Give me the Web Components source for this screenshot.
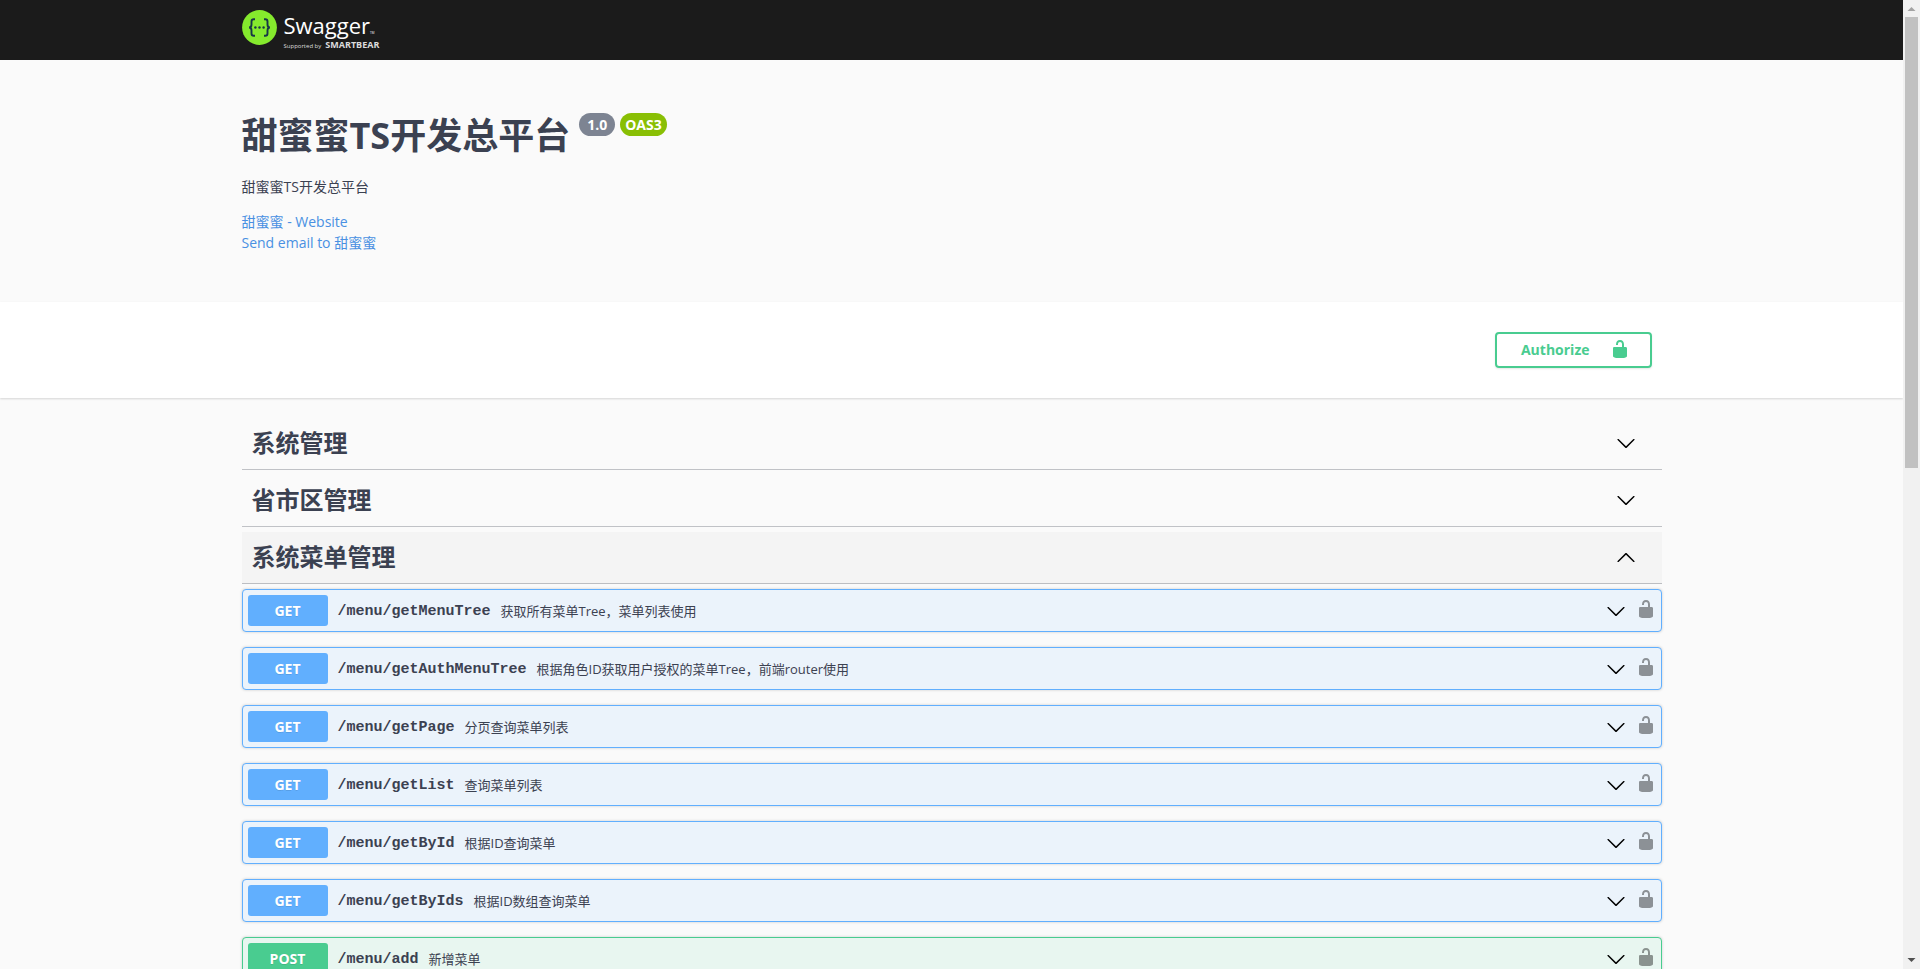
<!DOCTYPE html>
<html lang="zh-CN">
<head>
<meta charset="utf-8">
<meta name="viewport" content="width=device-width, initial-scale=1">
<title>Swagger UI</title>
<style>
  html, body { margin: 0; height: 100%; }
  body {
    font-family: "Open Sans", "Noto Sans CJK SC", sans-serif;
    font-size: 14px;
    color: #3b4151;
    background: #fafafa;
    overflow: hidden;
  }
</style>
</head>
<body>
<scroll-frame>
  <top-bar></top-bar>
  <api-info heading="甜蜜蜜TS开发总平台" version="1.0" spec="OAS3">
    甜蜜蜜TS开发总平台
    <a slot="contact" href="#website">甜蜜蜜 - Website</a>
    <a slot="contact" href="#email">Send email to 甜蜜蜜</a>
  </api-info>
  <auth-bar></auth-bar>
  <tag-list>
    <tag-section heading="系统管理"></tag-section>
    <tag-section heading="省市区管理"></tag-section>
    <tag-section heading="系统菜单管理" open>
      <api-operation method="get" path="/menu/getMenuTree">获取所有菜单Tree，菜单列表使用</api-operation>
      <api-operation method="get" path="/menu/getAuthMenuTree">根据角色ID获取用户授权的菜单Tree，前端router使用</api-operation>
      <api-operation method="get" path="/menu/getPage">分页查询菜单列表</api-operation>
      <api-operation method="get" path="/menu/getList">查询菜单列表</api-operation>
      <api-operation method="get" path="/menu/getById">根据ID查询菜单</api-operation>
      <api-operation method="get" path="/menu/getByIds">根据ID数组查询菜单</api-operation>
      <api-operation method="post" path="/menu/add">新增菜单</api-operation>
    </tag-section>
  </tag-list>
</scroll-frame>

<script>
const WRAP = `.wrap { box-sizing: border-box; max-width: 1460px; margin: 0 auto; padding: 0 20px; }`;
const RESET = `button { font: inherit; color: inherit; background: none; border: 0; margin: 0; padding: 0; cursor: pointer; text-align: left; }`;

function define(name, render) {
  customElements.define(name, class extends HTMLElement {
    connectedCallback() {
      if (this.shadowRoot) return;
      this.attachShadow({ mode: 'open' }).innerHTML = render(this);
    }
  });
}

const ICONS = {
  down: 'M17.418 6.109c.272-.268.709-.268.979 0s.271.701 0 .969l-7.908 7.83c-.27.268-.707.268-.979 0l-7.908-7.83c-.27-.268-.27-.701 0-.969.271-.268.709-.268.979 0L10 13.25l7.418-7.141z',
  up: 'M17.418 14.908c.272.27.709.27.979 0s.271-.701 0-.969l-7.908-7.83c-.27-.268-.707-.268-.979 0l-7.908 7.83c-.27.268-.27.701 0 .969.271.268.709.268.979 0L10 7.767l7.418 7.141z',
  unlocked: 'M15.8 8H14V5.6C14 2.703 12.665 1 10 1 7.334 1 6 2.703 6 5.6V6h2v-.801C8 3.754 8.797 3 10 3c1.203 0 2 .754 2 2.199V8H4c-.553 0-1 .646-1 1.199V17c0 .549.428 1.139.951 1.307l1.197.387C5.672 18.861 6.55 19 7.1 19h5.8c.549 0 1.428-.139 1.951-.307l1.196-.387c.524-.167.953-.757.953-1.306V9.199C17 8.646 16.352 8 15.8 8z'
};

define('ui-icon', el => `
  <style>
    :host { display: block; flex: none; width: 20px; height: 20px; }
    svg { display: block; width: 100%; height: 100%; fill: currentColor; }
  </style>
  <svg viewBox="0 0 20 20" aria-hidden="true"><path d="${ICONS[el.getAttribute('name')]}"/></svg>`);

define('scroll-frame', () => `
  <style>
    :host { display: grid; grid-template-columns: minmax(0, 1fr) 17px; height: 100vh; }
    .view { overflow: hidden; }
    .bar { display: flex; flex-direction: column; align-items: center; background: #f1f1f1; }
    .track { flex: 1; align-self: stretch; padding: 0 2px; }
    .thumb { height: 48.2%; background: #c1c1c1; }
    svg { display: block; width: 17px; height: 17px; }
  </style>
  <div class="view"><slot></slot></div>
  <div class="bar" aria-hidden="true">
    <svg viewBox="0 0 17 17"><path d="M8.5 7l4 4h-8z" fill="#a3a3a3"/></svg>
    <div class="track"><div class="thumb"></div></div>
    <svg viewBox="0 0 17 17"><path d="M8.5 10l-4-4h8z" fill="#505050"/></svg>
  </div>`);

define('top-bar', () => `
  <style>
    ${WRAP}
    :host { display: block; height: 60px; background: #1b1b1b; color: #fff; }
    a { display: inline-flex; gap: 7px; padding-top: 10px; color: inherit; text-decoration: none; }
    svg { display: block; width: 35px; height: 35px; }
    .name { display: flex; align-items: baseline; font-size: 22px; font-weight: 400; line-height: 31px; }
    .tm { font-size: 3px; line-height: 4px; }
    .by { display: flex; align-items: baseline; gap: 4px; font-size: 6px; line-height: 8px; color: #ddd; }
    .by b { font-size: 9px; font-weight: 700; }
    .text { display: flex; flex-direction: column; }
  </style>
  <div class="wrap">
    <a href="#top">
      <svg viewBox="0 0 35 35" aria-hidden="true">
        <circle cx="17.5" cy="17.5" r="17.4" fill="#85ea2d"/>
        <g fill="none" stroke="#173647" stroke-width="1.9">
          <path d="M13 9.3h-1.2c-1.6 0-2.3.8-2.3 2.3v2.8c0 1.9-.7 3-2.4 3.1 1.7.1 2.4 1.2 2.4 3.1v2.8c0 1.5.7 2.3 2.3 2.3H13"/>
          <path d="M22 9.3h1.2c1.6 0 2.3.8 2.3 2.3v2.8c0 1.9.7 3 2.4 3.1-1.7.1-2.4 1.2-2.4 3.1v2.8c0 1.5-.7 2.3-2.3 2.3H22"/>
        </g>
        <g fill="#173647"><circle cx="13.4" cy="17.5" r="1.2"/><circle cx="17.5" cy="17.5" r="1.2"/><circle cx="21.6" cy="17.5" r="1.2"/></g>
      </svg>
      <span class="text">
        <span class="name">Swagger<span class="tm">TM</span></span>
        <span class="by">Supported by <b>SMARTBEAR</b></span>
      </span>
    </a>
  </div>`);

define('api-info', el => `
  <style>
    ${WRAP}
    :host { display: block; padding: 49px 0; }
    .title { display: flex; gap: 5px; }
    h1 { margin: 0; padding-right: 4px; font-size: 36px; line-height: 54px; font-weight: 700; }
    .tag { margin-top: 4px; height: 23px; line-height: 23px; padding: 0 8px; border-radius: 12px; background: #7d8492; color: #fff; font-weight: 700; }
    .spec { padding: 0 5px; background: #89bf04; }
    p { margin: 14px 0; line-height: 20px; }
    .contact { display: flex; flex-direction: column; align-items: flex-start; line-height: 21px; }
    ::slotted(a) { color: #4990e2; text-decoration: none; }
  </style>
  <div class="wrap">
    <div class="title">
      <h1>${el.getAttribute('heading')}</h1>
      <span class="tag">${el.getAttribute('version')}</span>
      <span class="tag spec">${el.getAttribute('spec')}</span>
    </div>
    <p><slot></slot></p>
    <div class="contact"><slot name="contact"></slot></div>
  </div>`);

define('auth-bar', () => `
  <style>
    ${WRAP} ${RESET}
    :host { display: block; padding: 30px 0; background: #fff; box-shadow: 0 1px 2px rgba(0,0,0,.15); }
    .wrap { display: flex; justify-content: flex-end; }
    button { display: flex; align-items: center; gap: 20px; box-sizing: border-box; height: 36px; margin-right: 10px; padding: 0 20px 2px 24px; border: 2px solid #49cc90; border-radius: 4px; color: #49cc90; font-weight: 700; box-shadow: 0 1px 2px rgba(0,0,0,.1); }
  </style>
  <div class="wrap"><button type="button">Authorize <ui-icon name="unlocked"></ui-icon></button></div>`);

define('tag-list', () => `
  <style>${WRAP} :host { display: block; padding-top: 20px; }</style>
  <div class="wrap"><slot></slot></div>`);

define('tag-section', el => `
  <style>
    ${RESET}
    :host { display: block; }
    h3 { margin: 0 0 5px; font-size: 24px; font-weight: 700; border-bottom: 1px solid rgba(59,65,81,.3); }
    button { display: flex; align-items: center; justify-content: space-between; box-sizing: border-box; width: 100%; height: 51px; padding: 0 26px 1px 10px; line-height: 36px; }
    ui-icon { color: #000; }
    :host([open]) h3 { background: rgba(0,0,0,.024); }
    .body { display: grid; gap: 15px; }
  </style>
  <h3><button type="button" aria-expanded="${el.hasAttribute('open')}">${el.getAttribute('heading')}<ui-icon name="${el.hasAttribute('open') ? 'up' : 'down'}"></ui-icon></button></h3>
  <div class="body"><slot></slot></div>`);

define('api-operation', el => `
  <style>
    ${RESET}
    :host { --tone: #61affe; --fill: #ebf3fb; display: flex; align-items: center; gap: 10px; box-sizing: border-box; height: 43px; padding: 5px; border: 1px solid var(--tone); border-radius: 4px; background: var(--fill); box-shadow: 0 0 3px rgba(0,0,0,.19); }
    :host([method="post"]) { --tone: #49cc90; --fill: #e8f6f0; }
    .summary { display: flex; align-items: center; flex: 1; min-width: 0; gap: 10px; }
    .method { width: 80px; line-height: 31px; border-radius: 3px; background: var(--tone); color: #fff; font-weight: 700; text-align: center; text-transform: uppercase; text-shadow: 0 1px 0 rgba(0,0,0,.1); }
    .path { padding-top: 3px; font: 700 15px/20px "Liberation Mono", monospace; }
    .note { flex: 1; font-size: 13px; line-height: 20px; }
    .summary ui-icon { color: #000; }
    .lock { color: #000; opacity: .4; padding-bottom: 3px; }
  </style>
  <button class="summary" type="button" aria-expanded="false">
    <span class="method">${el.getAttribute('method')}</span>
    <span class="path">${el.getAttribute('path')}</span>
    <span class="note"><slot></slot></span>
    <ui-icon name="down"></ui-icon>
  </button>
  <button class="lock" type="button" aria-label="authorization button unlocked"><ui-icon name="unlocked"></ui-icon></button>`);
</script>
</body>
</html>
